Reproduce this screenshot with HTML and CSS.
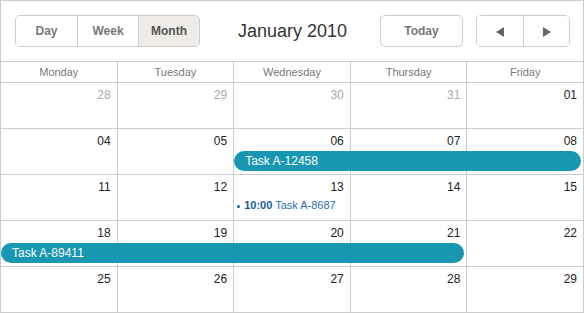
FILE: index.html
```html
<!DOCTYPE html>
<html lang="en">
<head>
  <meta charset="UTF-8" />
  <title>Scheduler - Month view</title>
  <link rel="stylesheet" href="styles.css">
</head>
<body>
<div class="scheduler">
  <div class="toolbar">
    <div class="btn-group">
      <button class="btn">Day</button>
      <button class="btn">Week</button>
      <button class="btn active">Month</button>
    </div>
    <div class="title">January 2010</div>
    <div class="toolbar-right">
      <button class="btn single today">Today</button>
      <div class="btn-group nav">
        <button class="btn"><span class="tri left"></span></button>
        <button class="btn"><span class="tri right"></span></button>
      </div>
    </div>
  </div>

  <div class="day-names">
    <div>Monday</div>
    <div>Tuesday</div>
    <div>Wednesday</div>
    <div>Thursday</div>
    <div>Friday</div>
  </div>

  <div class="week">
    <div class="cell other">28</div>
    <div class="cell other">29</div>
    <div class="cell other">30</div>
    <div class="cell other">31</div>
    <div class="cell">01</div>
  </div>
  <div class="week">
    <div class="cell">04</div>
    <div class="cell">05</div>
    <div class="cell">06</div>
    <div class="cell">07</div>
    <div class="cell">08</div>
    <div class="event" style="grid-column: 3 / 6;">Task A-12458</div>
  </div>
  <div class="week">
    <div class="cell">11</div>
    <div class="cell">12</div>
    <div class="cell">13</div>
    <div class="cell">14</div>
    <div class="cell">15</div>
    <div class="task" style="grid-column: 3 / 4;"><span class="dot"></span><b>10:00</b> Task A-8687</div>
  </div>
  <div class="week">
    <div class="cell">18</div>
    <div class="cell">19</div>
    <div class="cell">20</div>
    <div class="cell">21</div>
    <div class="cell">22</div>
    <div class="event" style="grid-column: 1 / 5;">Task A-89411</div>
  </div>
  <div class="week">
    <div class="cell">25</div>
    <div class="cell">26</div>
    <div class="cell">27</div>
    <div class="cell">28</div>
    <div class="cell">29</div>
  </div>
</div>
</body>
</html>
```

FILE: styles.css
```css
body {
  margin: 0;
  font-family: "Liberation Sans", Arial, sans-serif;
  background: #fff;
}
.scheduler {
  width: 584px;
  height: 313px;
  box-sizing: border-box;
  border-top: 1px solid #ccc;
  border-left: 1px solid #ccc;
  overflow: hidden;
}
.toolbar {
  height: 60px;
  border-bottom: 1px solid #ccc;
  border-right: 1px solid #ccc;
  display: grid;
  grid-template-columns: 1fr auto 1fr;
  align-items: center;
  padding: 0 13px 0 14px;
}
.toolbar-right {
  display: flex;
  justify-content: flex-end;
  gap: 13px;
}
.title {
  font-size: 18px;
  color: #333;
}
.btn-group {
  display: flex;
  width: max-content;
  border: 1px solid #ccc;
  border-radius: 5px;
  overflow: hidden;
}
.btn {
  height: 30px;
  font-family: inherit;
  font-size: 12px;
  font-weight: bold;
  color: #777;
  background: #fff;
  border: none;
  border-left: 1px solid #ccc;
  padding: 0;
  width: 61px;
}
.btn-group .btn:first-child {
  border-left: none;
  width: 61px;
}
.btn.active {
  background: #efebe6;
  color: #555;
}
.btn.single {
  width: 83px;
  height: 32px;
  border: 1px solid #ccc;
  border-radius: 5px;
}
.nav .btn, .nav .btn:first-child {
  width: 46px;
}
.tri {
  display: inline-block;
  width: 0;
  height: 0;
  border-top: 5px solid transparent;
  border-bottom: 5px solid transparent;
  vertical-align: middle;
}
.tri.left { border-right: 8px solid #666; }
.tri.right { border-left: 8px solid #666; }

.day-names {
  display: grid;
  grid-template-columns: repeat(5, minmax(0, 1fr));
  height: 20px;
  border-bottom: 1px solid #ccc;
}
.day-names div {
  border-right: 1px solid #ccc;
  font-size: 11px;
  color: #777;
  text-align: center;
  line-height: 20px;
}
.week {
  display: grid;
  grid-template-columns: repeat(5, minmax(0, 1fr));
  grid-template-rows: 22px 23px;
  border-bottom: 1px solid #ccc;
}
.cell {
  grid-row: 1 / 3;
  border-right: 1px solid #ccc;
  text-align: right;
  font-size: 12px;
  color: #222;
  padding: 5px 6px 0 0;
}
.cell:nth-child(1) { grid-column: 1; }
.cell:nth-child(2) { grid-column: 2; }
.cell:nth-child(3) { grid-column: 3; }
.cell:nth-child(4) { grid-column: 4; }
.cell:nth-child(5) { grid-column: 5; }
.cell.other {
  color: #aaa;
}
.event {
  grid-row: 2;
  align-self: start;
  height: 20px;
  line-height: 20px;
  margin-right: 3px;
  background: #1797b1;
  color: #fff;
  font-size: 12px;
  padding-left: 11px;
  border-radius: 10px;
}
.task {
  grid-row: 2;
  align-self: start;
  margin-top: 2px;
  padding-left: 3px;
  font-size: 11px;
  color: #2a70b0;
  white-space: nowrap;
}
.task b {
  color: #1b5b98;
}
.dot {
  display: inline-block;
  width: 3px;
  height: 3px;
  border-radius: 50%;
  background: #1b5b98;
  margin-right: 4px;
  vertical-align: middle;
}
```
